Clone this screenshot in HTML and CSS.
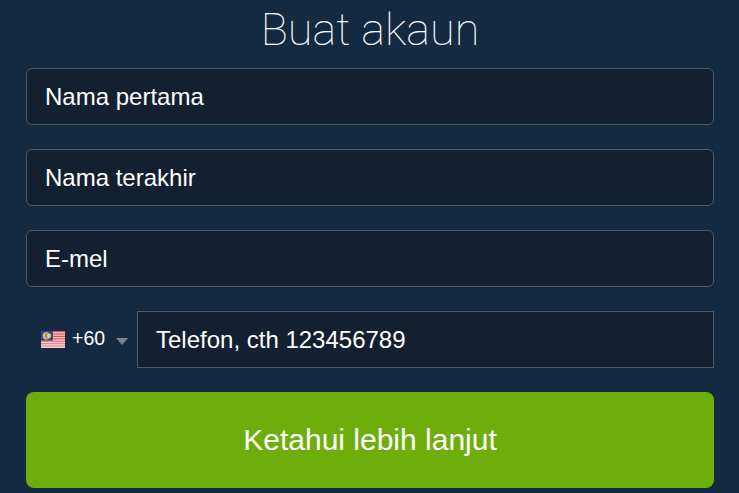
FILE: index.html
```html
<!DOCTYPE html>
<html lang="ms">
<head>
    <meta charset="UTF-8">
    <title>Buat akaun</title>
    <link rel="stylesheet" href="styles.css">
</head>
<body>
    <form class="signup">
        <h2>Buat akaun</h2>

        <input type="text" class="field" placeholder="Nama pertama">
        <input type="text" class="field" placeholder="Nama terakhir">
        <input type="text" class="field" placeholder="E-mel">

        <div class="phone-row">
            <div class="country">
                <svg class="flag" width="24" height="17" viewBox="0 0 24 17">
                    <rect width="24" height="17" fill="#f6d4d4"/>
                    <rect y="0" width="24" height="1.2" fill="#e8504f"/>
                    <rect y="2.4" width="24" height="1.2" fill="#e8504f"/>
                    <rect y="4.8" width="24" height="1.2" fill="#e8504f"/>
                    <rect y="7.2" width="24" height="1.2" fill="#e8504f"/>
                    <rect y="9.6" width="24" height="1.2" fill="#ea6a68"/>
                    <rect y="12" width="24" height="1.2" fill="#ea8a88"/>
                    <rect y="14.4" width="24" height="1.2" fill="#ea8a88"/>
                    <rect width="12" height="9.6" fill="#3a3fa0"/>
                    <circle cx="5.4" cy="4.8" r="3.6" fill="#e8cf5a"/>
                    <circle cx="6.4" cy="4.8" r="2.6" fill="#8c8a78"/>
                    <circle cx="8" cy="4.8" r="2.2" fill="#e8cf5a"/>
                </svg>
                <span class="code">+60</span>
                <span class="caret"></span>
            </div>
            <input type="text" class="field phone" placeholder="Telefon, cth 123456789">
        </div>

        <button type="button" class="submit">Ketahui lebih lanjut</button>
    </form>
</body>
</html>
```

FILE: styles.css
```css
html, body {
    margin: 0;
    height: 100%;
}

body {
    font-family: "Liberation Sans", Arial, sans-serif;
    background-color: #132a40;
    overflow: hidden;
}

.signup {
    display: flex;
    flex-direction: column;
    gap: 24px;
    padding: 0 25px 0 26px;
}

.signup h2 {
    margin: 0 0 -24px;
    height: 68px;
    line-height: 60px;
    font-family: Roboto, sans-serif;
    font-size: 45px;
    font-weight: 100;
    color: #fff;
    text-align: center;
}

.field {
    box-sizing: border-box;
    width: 100%;
    height: 57px;
    padding: 0 18px;
    background-color: #122032;
    border: 1px solid #4f5a64;
    border-radius: 6px;
    font-family: inherit;
    font-size: 24px;
    color: #fff;
    outline: none;
}

.field::placeholder {
    color: #fff;
    opacity: 1;
}

.phone-row {
    display: flex;
    align-items: stretch;
}

.country {
    display: flex;
    align-items: center;
    flex: 0 0 111px;
    padding-left: 15px;
    box-sizing: border-box;
    color: #fff;
}

.code {
    margin: -2px 0 0 7px;
    font-size: 19.5px;
}

.caret {
    margin-left: 11px;
    margin-top: 3px;
    border-left: 6px solid transparent;
    border-right: 6px solid transparent;
    border-top: 7px solid #7d838b;
}

.phone {
    flex: 1;
    width: auto;
    border-radius: 0;
}

.submit {
    height: 96px;
    background-color: #6eae0c;
    border: none;
    border-radius: 8px;
    font-family: inherit;
    font-size: 30px;
    color: #fff;
    cursor: pointer;
}
```
